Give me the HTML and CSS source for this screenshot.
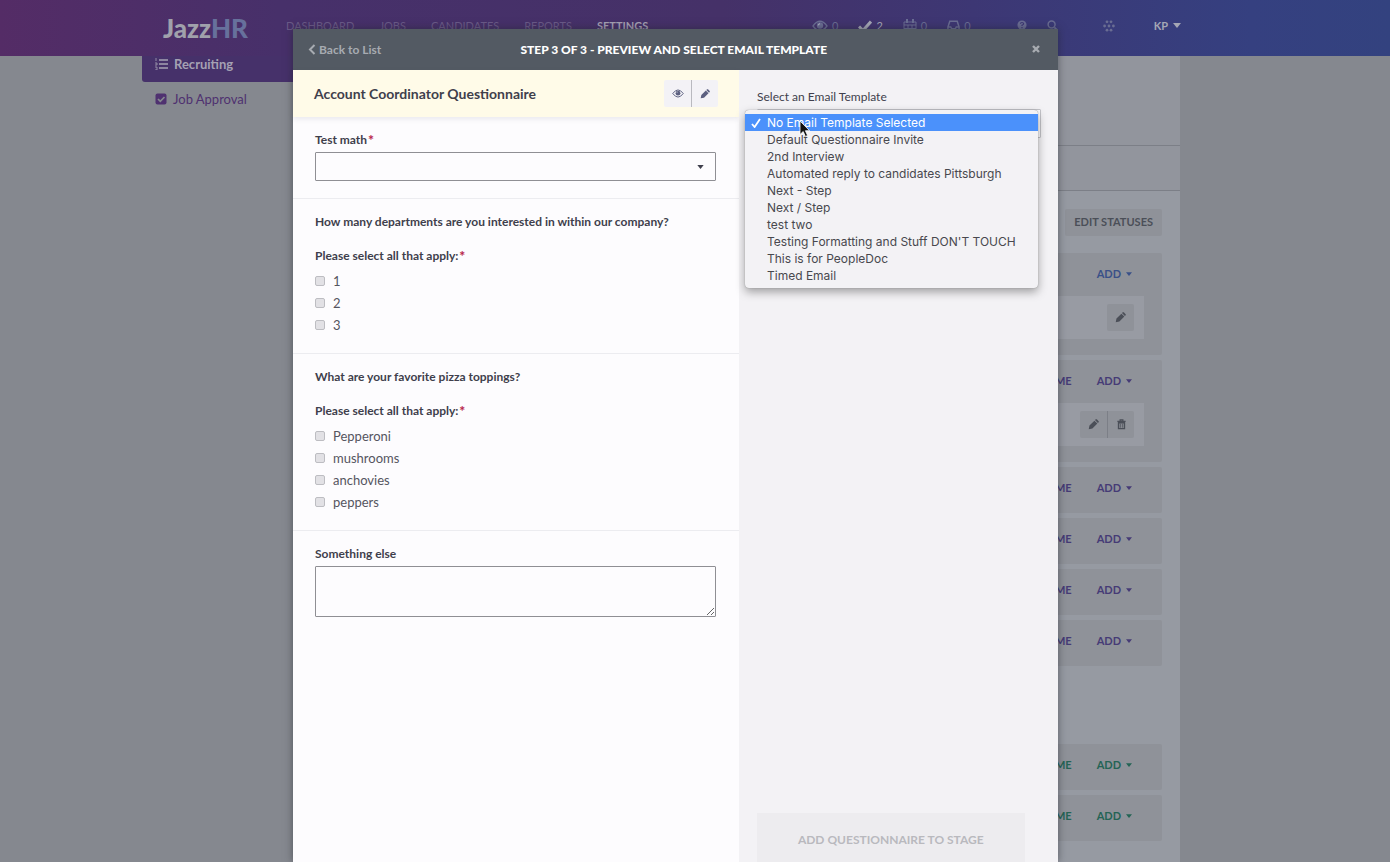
FILE: index.html
```
<!DOCTYPE html>
<html lang="en">
<head>
  <meta charset="UTF-8">
  <title>JazzHR - Settings</title>
  <link rel="stylesheet" href="styles.css">
</head>
<body>

  <!-- icons -->
  <svg class="sprite" aria-hidden="true">
    <symbol id="eye" viewBox="0 0 16 12"><path d="M1 6Q8-3.500 15 6Q8 15.500 1 6Z" fill="none" stroke="currentColor" stroke-width="1.300"/><circle cx="8" cy="5.500" r="3.200" fill="currentColor"/><path d="M6.300 5.400A1.800 1.800 0 0 1 8 3.700" fill="none" stroke="#fff" stroke-opacity=".6" stroke-width=".8"/></symbol>
    <symbol id="pencil" viewBox="0 0 12 12"><path d="M.8 11.200l.8-4L7 1.800l3.200 3.200L4.800 10.400zM7.600 1.200l.9-.8q.6-.4 1.100 0l2 2q.5.600 0 1.100l-.8.900z" fill="currentColor"/></symbol>
    <symbol id="trash" viewBox="0 0 12 12"><path d="M1.500 2.500h9M4.500 2V1h3v1" fill="none" stroke="currentColor" stroke-width="1.300"/><path d="M2.800 4h6.400v6.500H2.800z" fill="none" stroke="currentColor" stroke-width="1.600"/><path d="M5 5v4.500M7 5v4.500" stroke="currentColor" stroke-width=".8"/></symbol>
    <symbol id="caret" viewBox="0 0 8 5"><path d="M0 0h8L4 5z" fill="currentColor"/></symbol>
    <symbol id="check" viewBox="0 0 14 12"><path d="M1 6.500l4 4L13 1.500" fill="none" stroke="currentColor" stroke-width="3"/></symbol>
    <symbol id="calendar" viewBox="0 0 14 14"><path d="M1 3h12v10H1zM1 6h12M1 9.500h12M5 6v7M9 6v7" fill="none" stroke="currentColor"/><path d="M4 0v4M10 0v4" stroke="currentColor" stroke-width="2"/></symbol>
    <symbol id="inbox" viewBox="0 0 14 12"><path d="M1 7L3 1h8l2 6v4H1zM1 7h3l1 2h4l1-2h3" fill="none" stroke="currentColor" stroke-width="1.600"/></symbol>
    <symbol id="help" viewBox="0 0 12 12"><circle cx="6" cy="6" r="5.500" fill="currentColor"/><path d="M4 4.500Q4.200 3 6 3T8 4.500Q8 5.500 6 6.300V7.300M6 8.300v1.500" fill="none" stroke="#3d3774" stroke-width="1.400"/></symbol>
    <symbol id="search" viewBox="0 0 12 12"><circle cx="5" cy="5" r="3.800" fill="none" stroke="currentColor" stroke-width="1.600"/><path d="M8 8l3.200 3.200" stroke="currentColor" stroke-width="2"/></symbol>
    <symbol id="dots" viewBox="0 0 12 12"><g fill="currentColor"><circle cx="4" cy="1.800" r="1.400"/><circle cx="8" cy="1.800" r="1.400"/><circle cx="1.600" cy="6" r="1.400"/><circle cx="6" cy="6" r="1.400"/><circle cx="10.400" cy="6" r="1.400"/><circle cx="4" cy="10.200" r="1.400"/><circle cx="8" cy="10.200" r="1.400"/></g></symbol>
  </svg>

  <header class="topbar">
    <a class="logo" href="#">Jazz<span>HR</span></a>
    <nav class="main-nav">
      <a href="#">DASHBOARD</a>
      <a href="#">JOBS</a>
      <a href="#">CANDIDATES</a>
      <a href="#">REPORTS</a>
      <a class="active" href="#">SETTINGS</a>
    </nav>
    <div class="counters">
      <a href="#"><svg width="16" height="12"><use href="#eye"/></svg>0</a>
      <a class="bright" href="#"><svg width="14" height="12"><use href="#check"/></svg>2</a>
      <a href="#"><svg width="14" height="14"><use href="#calendar"/></svg>0</a>
      <a href="#"><svg width="13" height="12"><use href="#inbox"/></svg>0</a>
    </div>
    <div class="tools">
      <button type="button" aria-label="Help"><svg width="10" height="10"><use href="#help"/></svg></button>
      <button type="button" aria-label="Search"><svg width="11" height="11"><use href="#search"/></svg></button>
    </div>
    <button class="apps" type="button" aria-label="Apps"><svg width="12" height="12"><use href="#dots"/></svg></button>
    <button class="user" type="button">KP <svg width="8" height="5"><use href="#caret"/></svg></button>
  </header>

  <div class="page">
    <nav class="side-nav">
      <a class="active" href="#">
        <svg width="13" height="12" viewBox="0 0 13 12"><path d="M4 2h9M4 6h9M4 10h9" stroke="currentColor" stroke-width="1.500"/><path d="M1 0v3M0 5h2v2H0M0 9h2v3H0" fill="none" stroke="currentColor" stroke-width=".8"/></svg>
        Recruiting
      </a>
      <a href="#">
        <svg width="12" height="12" viewBox="0 0 12 12"><rect x=".5" y=".5" width="11" height="11" rx="2" fill="currentColor"/><path d="M3 6l2.300 2.300L9.500 4" fill="none" stroke="#85888f" stroke-width="1.700"/></svg>
        Job Approval
      </a>
    </nav>

    <main class="content">
      <div class="band tall"></div>
      <div class="band"></div>
      <div class="workflow">
        <button class="edit-statuses" type="button">EDIT STATUSES</button>

        <section class="stages">
          <div class="stage blue">
            <div class="stage-head"><button type="button">ADD <svg width="6" height="4"><use href="#caret"/></svg></button></div>
            <div class="stage-item"><div class="btn-group"><button type="button" aria-label="Edit"><svg width="11" height="11"><use href="#pencil"/></svg></button></div></div>
          </div>
          <div class="stage">
            <div class="stage-head"><button type="button">RENAME</button><button type="button">ADD <svg width="6" height="4"><use href="#caret"/></svg></button></div>
            <div class="stage-item"><div class="btn-group"><button type="button" aria-label="Edit"><svg width="11" height="11"><use href="#pencil"/></svg></button><button type="button" aria-label="Delete"><svg width="11" height="11"><use href="#trash"/></svg></button></div></div>
          </div>
          <div class="stage"><div class="stage-head"><button type="button">RENAME</button><button type="button">ADD <svg width="6" height="4"><use href="#caret"/></svg></button></div></div>
          <div class="stage"><div class="stage-head"><button type="button">RENAME</button><button type="button">ADD <svg width="6" height="4"><use href="#caret"/></svg></button></div></div>
          <div class="stage"><div class="stage-head"><button type="button">RENAME</button><button type="button">ADD <svg width="6" height="4"><use href="#caret"/></svg></button></div></div>
          <div class="stage"><div class="stage-head"><button type="button">RENAME</button><button type="button">ADD <svg width="6" height="4"><use href="#caret"/></svg></button></div></div>
        </section>

        <section class="stages hired">
          <div class="stage green"><div class="stage-head"><button type="button">RENAME</button><button type="button">ADD <svg width="6" height="4"><use href="#caret"/></svg></button></div></div>
          <div class="stage green"><div class="stage-head"><button type="button">RENAME</button><button type="button">ADD <svg width="6" height="4"><use href="#caret"/></svg></button></div></div>
        </section>
      </div>
    </main>
  </div>

  <div class="modal" role="dialog" aria-labelledby="modalTitle">
    <div class="modal-head">
      <a class="back" href="#"><svg width="8" height="11" viewBox="0 0 8 11"><path d="M6.500 1L2 5.500L6.500 10" fill="none" stroke="currentColor" stroke-width="2"/></svg>Back to List</a>
      <h1 id="modalTitle">STEP 3 OF 3 - PREVIEW AND SELECT EMAIL TEMPLATE</h1>
      <button class="close" type="button" aria-label="Close"><svg width="8" height="8" viewBox="0 0 8 8"><path d="M1 1l6 6M7 1L1 7" stroke="currentColor" stroke-width="2.400"/></svg></button>
    </div>

    <div class="modal-body">
      <div class="preview">
        <div class="preview-head">
          <h2>Account Coordinator Questionnaire</h2>
          <div class="btn-group light">
            <button type="button" aria-label="Preview"><svg width="12" height="9"><use href="#eye"/></svg></button>
            <button type="button" aria-label="Edit"><svg width="10" height="10"><use href="#pencil"/></svg></button>
          </div>
        </div>

        <div class="question">
          <label class="title" for="math">Test math <sup>*</sup></label>
          <div class="select-wrap">
            <select id="math"><option></option></select>
            <svg width="7" height="4"><use href="#caret"/></svg>
          </div>
        </div>

        <div class="question">
          <p class="title">How many departments are you interested in within our company?</p>
          <p class="title hint">Please select all that apply: <sup>*</sup></p>
          <div class="options">
            <label><input type="checkbox" name="departments">1</label>
            <label><input type="checkbox" name="departments">2</label>
            <label><input type="checkbox" name="departments">3</label>
          </div>
        </div>

        <div class="question">
          <p class="title">What are your favorite pizza toppings?</p>
          <p class="title hint">Please select all that apply: <sup>*</sup></p>
          <div class="options">
            <label><input type="checkbox" name="toppings">Pepperoni</label>
            <label><input type="checkbox" name="toppings">mushrooms</label>
            <label><input type="checkbox" name="toppings">anchovies</label>
            <label><input type="checkbox" name="toppings">peppers</label>
          </div>
        </div>

        <div class="question">
          <label class="title" for="other">Something else</label>
          <textarea id="other"></textarea>
        </div>
      </div>

      <div class="template">
        <label for="template">Select an Email Template</label>
        <div class="template-field">
          <select id="template"></select>
          <ul class="menu" role="listbox" aria-label="Email templates">
            <li class="selected" role="option" aria-selected="true"><svg width="10" height="10" viewBox="0 0 10 10"><path d="M1 6l2.600 3L9 1" fill="none" stroke="currentColor" stroke-width="1.800"/></svg>No Email Template Selected</li>
            <li role="option">Default Questionnaire Invite</li>
            <li role="option">2nd Interview</li>
            <li role="option">Automated reply to candidates Pittsburgh</li>
            <li role="option">Next - Step</li>
            <li role="option">Next / Step</li>
            <li role="option">test two</li>
            <li role="option">Testing Formatting and Stuff DON'T TOUCH</li>
            <li role="option">This is for PeopleDoc</li>
            <li role="option">Timed Email</li>
          </ul>
          <svg class="cursor" width="12" height="18" viewBox="0 0 12 18"><path d="M1 1v13.500l3.200-3 2.200 5 2.200-1-2.200-4.800h4.200z" fill="#111" stroke="#fff" stroke-width=".8"/></svg>
        </div>
        <button class="add-btn" type="button" disabled>ADD QUESTIONNAIRE TO STAGE</button>
      </div>
    </div>
  </div>

</body>
</html>
```
FILE: styles.css
```
* { box-sizing: border-box; }
body { margin: 0; height: 100vh; overflow: hidden; position: relative; background: #85888f; font-family: Lato, sans-serif; font-size: 13px; color: #3f3f4c; }
button { border: 0; padding: 0; background: none; font: inherit; color: inherit; cursor: pointer; }
a { color: inherit; text-decoration: none; }
h1, h2, p, ul { margin: 0; padding: 0; }
svg { flex: none; }
.sprite { position: absolute; width: 0; height: 0; }

/* top bar */
.topbar { display: flex; align-items: center; height: 56px; padding: 0 209px 5px 163px; background: linear-gradient(90deg, #542c66 0, #47306a 20%, #453168 52%, #3d3774 70%, #354080 90%, #33427f 100%); color: #6a6d93; font-size: 11px; }
.logo { width: 123px; padding-top: 4px; font-size: 26px; font-weight: 900; line-height: 30px; color: #a0a1ab; }
.logo span { color: #67719c; }
.main-nav { display: flex; gap: 25px; color: #6a5a87; }
.main-nav .active { font-weight: bold; color: #a39fb1; }
.counters { display: flex; gap: 20px; margin-left: auto; }
.counters a { display: flex; align-items: center; gap: 4px; }
.counters .bright, .user { color: #a5a7b5; }
.tools { display: flex; gap: 20px; margin-left: 46px; }
.apps { margin-left: 45px; }
.apps, .tools button { display: flex; }
.user { display: flex; align-items: center; gap: 5px; margin-left: 39px; font-weight: bold; }

/* page behind the dialog */
.page { display: flex; padding: 0 210px 0 142px; height: calc(100vh - 56px); }
.side-nav { width: 151px; color: #4f3170; }
.side-nav a { display: flex; align-items: center; gap: 6px; height: 34px; padding-left: 13px; }
.side-nav .active { height: 26px; padding-bottom: 11px; border-radius: 0 0 0 3px; background: #46316a; color: #a5a1b3; font-weight: bold; }
.content { flex: 1; background: #969aa2; }
.band { height: 45px; border-bottom: 1px solid #7c7f87; background: #92959d; }
.band.tall { height: 90px; }
.workflow { display: flex; flex-direction: column; padding: 18px 18px 0 0; }
.edit-statuses { align-self: flex-end; height: 27px; padding: 0 9px 2px; border-radius: 2px; background: #8f9299; color: #4b4f58; font-size: 11px; font-weight: bold; }
.stages { display: flex; flex-direction: column; gap: 5px; margin-top: 17px; color: #463b76; font-size: 11px; font-weight: bold; }
.stages.hired { margin-top: 78px; }
.stage { border-radius: 2px; background: #8f9299; }
.stage.blue { color: #3a5088; }
.stage.green { color: #246455; }
.stage-head { display: flex; justify-content: flex-end; align-items: center; gap: 25px; height: 46px; padding: 0 30px 5px 0; }
.stage-head button { display: flex; align-items: center; gap: 5px; }
.stage-item { display: flex; justify-content: flex-end; align-items: center; height: 43px; margin: -3px 18px 0 0; padding-right: 10px; background: #989ba3; }
.stage:has(.stage-item) { padding-bottom: 16px; }
.btn-group { display: flex; border-radius: 2px; background: #8f9299; color: #4b4f58; }
.btn-group button { display: flex; align-items: center; justify-content: center; width: 27px; height: 27px; }
.btn-group button + button { border-left: 1px solid #7c7f87; }
.btn-group.light { background: #f3f2f6; color: #5c6080; }
.btn-group.light button + button { border-color: #b9b9bf; }

/* dialog */
.modal { position: absolute; top: 29px; bottom: 0; left: 293px; width: 55%; display: flex; flex-direction: column; box-shadow: 0 0 8px rgba(30, 32, 40, .5); }
.modal-head { display: grid; grid-template-columns: 1fr auto 1fr; align-items: center; height: 41px; padding: 0 18px 1px 15px; background: #535a63; color: #a7abb1; }
.modal-head h1 { font-size: 12px; font-weight: 900; color: #fff; }
.back { display: flex; align-items: center; gap: 3px; font-size: 12px; font-weight: bold; }
.close { display: flex; justify-self: end; }
.modal-body { display: flex; flex: 1; min-height: 0; }
.preview { width: 446px; background: #fdfcfe; }
.preview-head { display: flex; justify-content: space-between; align-items: center; height: 47px; padding: 0 21px; background: #fffbe8; box-shadow: 0 2px 5px rgba(60, 60, 90, .1); }
.preview-head h2 { font-size: 14px; font-weight: bold; }
.question { padding: 13px 23px 17px 22px; border-bottom: 1px solid #ececf0; }
.question:last-child { border: 0; }
.title { display: block; margin-bottom: 2px; font-size: 12px; line-height: 20px; font-weight: bold; }
.title sup { margin-left: -2px; font-size: 14px; font-weight: 900; line-height: 0; vertical-align: -1px; color: #b8274c; }
.hint { margin-top: 14px; margin-bottom: 4px; }
p.title:first-child { margin-bottom: 0; }
.select-wrap { display: grid; align-items: center; }
.select-wrap select, .select-wrap svg { grid-area: 1 / 1; }
.select-wrap svg { justify-self: end; margin-right: 12px; pointer-events: none; }
select { appearance: none; width: 100%; height: 29px; border: 1px solid #8f8f94; border-radius: 1px; background: #fdfcfe; }
textarea { display: block; width: 100%; height: 51px; border: 1px solid #8f8f94; border-radius: 1px; background: #fdfcfe; }
.options label { display: flex; align-items: center; gap: 8px; height: 22px; font-size: 13px; color: #55555f; }
.options input { appearance: none; width: 10px; height: 10px; margin: 0; border: 1px solid #bdbdc2; border-radius: 2px; background: #e2e1e5; }

.template { flex: 1; display: flex; flex-direction: column; padding: 17px 17px 0 18px; background: #f3f2f5; }
.template > label { margin-bottom: 2px; font-size: 12px; line-height: 20px; }
.template-field { position: relative; }
.template-field select { display: block; border-color: #c4c4c9; }
.menu { position: absolute; top: 1px; left: -12px; width: 293px; padding: 4px 0; border-radius: 4px; background: #f3f2f5; box-shadow: 0 0 1px #777, 0 4px 10px rgba(0, 0, 0, .35); list-style: none; font-family: Inter, sans-serif; font-size: 12px; line-height: 17px; color: #48484e; }
.menu li { padding-left: 22px; }
.menu .selected { display: flex; align-items: center; gap: 6px; padding-left: 6px; background: #4b91fb; color: #fff; }
.cursor { position: absolute; top: 11px; left: 42px; }
.add-btn { height: 49px; margin: auto 16px 0 0; padding-top: 4px; background: #edecef; color: #b9b9be; font-size: 12px; font-weight: bold; cursor: default; }
```
